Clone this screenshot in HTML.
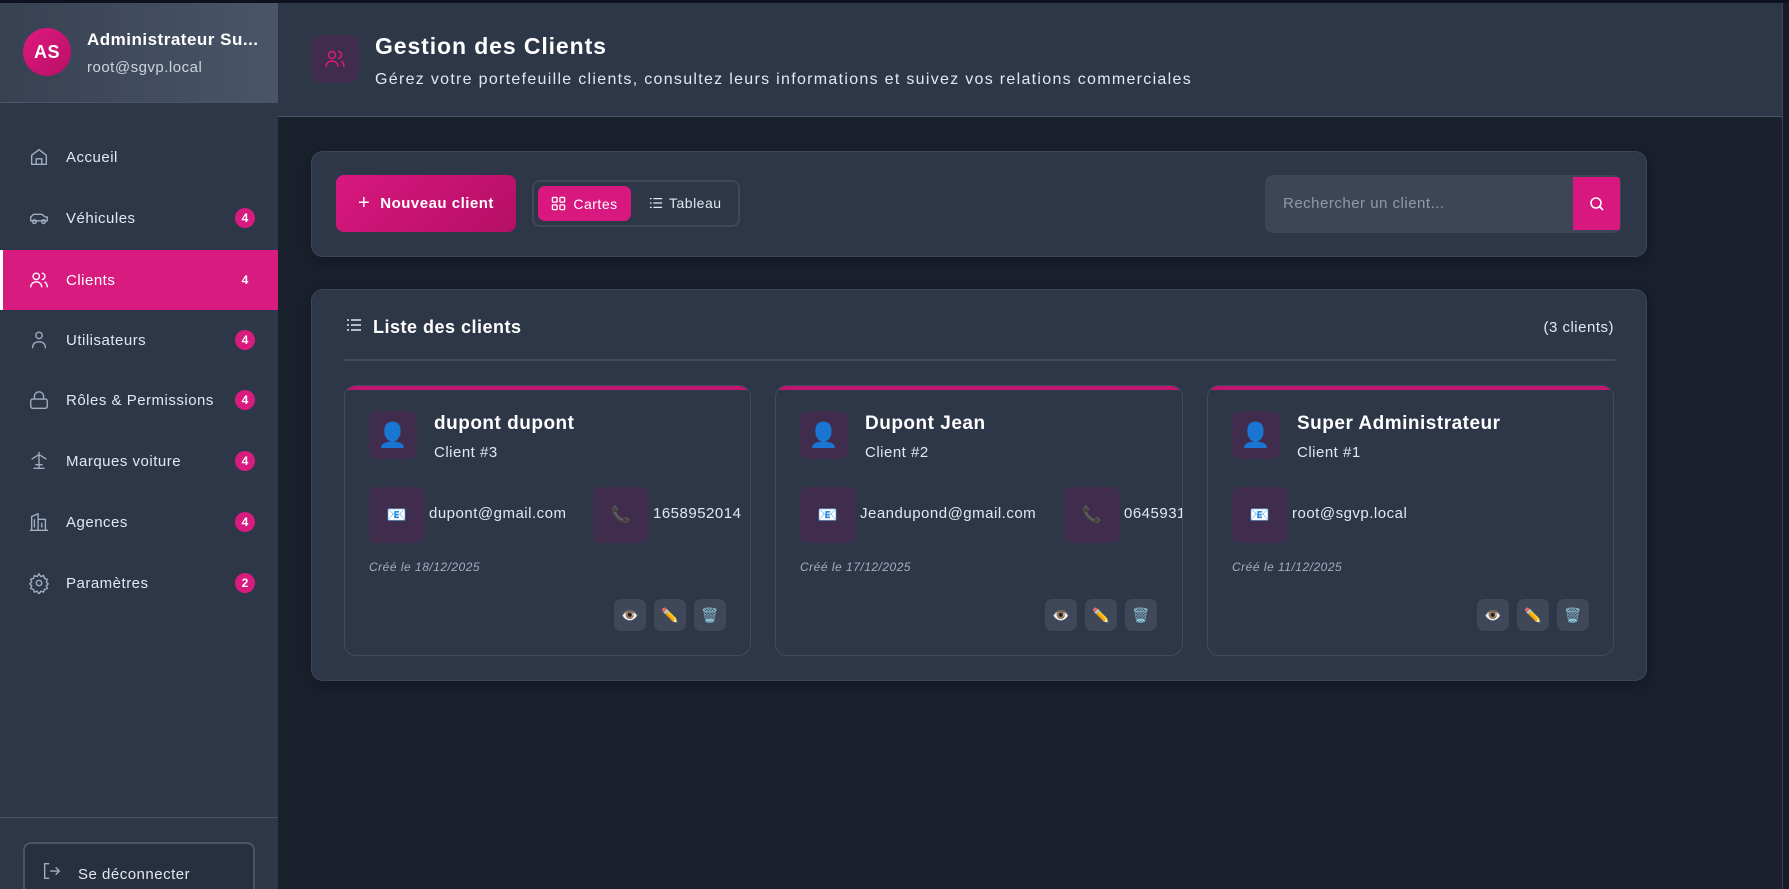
<!DOCTYPE html>
<html><head><meta charset="utf-8"><style>
*{box-sizing:border-box;margin:0;padding:0}
body{width:1789px;height:889px;overflow:hidden;background:#1a202c;font-family:"Liberation Sans",sans-serif;color:#e2e8f0;position:relative;letter-spacing:0.5px}
.abs{position:absolute}
.top{left:0;top:0;width:1789px;height:3px;background:#0e1220}
.side{left:0;top:3px;width:278px;height:886px;background:#2d3748;overflow:hidden}
.sh{left:0;top:0;width:278px;height:100px;background:linear-gradient(90deg,#374152,#4a5568);border-bottom:1px solid #4a5568}
.av{left:23px;top:25px;width:48px;height:48px;border-radius:50%;background:linear-gradient(135deg,#e0197f,#b80f66);color:#fff;font-weight:bold;font-size:18px;display:flex;align-items:center;justify-content:center}
.nav{left:0;width:278px;height:60px;display:flex;align-items:center;font-size:15px;color:#e2e8f0}
.nav svg{position:absolute;left:28px}
.nav span.t{position:absolute;left:66px}
.badge{position:absolute;left:235px;width:20px;height:20px;border-radius:50%;background:#d81b7f;color:#fff;font-size:12px;font-weight:bold;display:flex;align-items:center;justify-content:center;letter-spacing:0}
.active{background:#d81b7f;border-left:3px solid #fff}
.active .badge{background:transparent}
.mh{left:278px;top:3px;width:1504px;height:114px;background:#2d3748;border-bottom:1px solid #4a5568}
.card{background:#2d3748;border:1px solid #3c4657;border-radius:12px;box-shadow:0 4px 14px rgba(0,0,0,.25)}
.cc{background:#2d3748;border:1px solid #414b5c;border-radius:12px;overflow:hidden}
.cc .bar{position:absolute;left:0;top:0;right:0;height:4px;background:#c2166f}
.box{background:#402d4d;border-radius:8px;display:flex;align-items:center;justify-content:center}
.ab{width:32px;height:32px;border-radius:7px;background:#3e4858;display:flex;align-items:center;justify-content:center;font-size:14px}
</style></head><body>
<div class="abs top"></div>
<div class="abs side">
 <div class="abs sh">
  <div class="abs av">AS</div>
  <div class="abs" style="left:87px;top:27px;font-size:17px;font-weight:bold;color:#fff">Administrateur Su...</div>
  <div class="abs" style="left:87px;top:56px;font-size:15px;color:#cbd5e0">root@sgvp.local</div>
 </div>
 <div class="abs nav" style="top:124px"><svg width="22" height="22" viewBox="0 0 24 24" fill="none" stroke="#a0aec0" stroke-width="1.5"><path d="M4 10l8-6 8 6v10H4z M9 20v-6h6v6"/></svg><span class="t">Accueil</span></div>
 <div class="abs nav" style="top:185px"><svg width="22" height="22" viewBox="0 0 24 24" fill="none" stroke="#a0aec0" stroke-width="1.5"><path d="M3 15v-4l3-3h9l4 3h2v4H3z"/><circle cx="7" cy="16" r="2"/><circle cx="17" cy="16" r="2"/></svg><span class="t">Véhicules</span><span class="badge">4</span></div>
 <div class="abs nav active" style="top:247px"><svg width="22" height="22" viewBox="0 0 24 24" fill="none" stroke="#fff" stroke-width="1.5" style="left:25px"><circle cx="9" cy="8" r="3.5"/><path d="M3 20c0-4 3-6 6-6s6 2 6 6M15 4.5a3.5 3.5 0 010 7M18 14c2 1 3 3 3 6"/></svg><span class="t" style="left:63px;color:#fff">Clients</span><span class="badge" style="left:232px">4</span></div>
 <div class="abs nav" style="top:307px"><svg width="22" height="22" viewBox="0 0 24 24" fill="none" stroke="#a0aec0" stroke-width="1.5"><circle cx="12" cy="7" r="3.5"/><path d="M5 21c0-5 3-7 7-7s7 2 7 7"/></svg><span class="t">Utilisateurs</span><span class="badge">4</span></div>
 <div class="abs nav" style="top:367px"><svg width="22" height="22" viewBox="0 0 24 24" fill="none" stroke="#a0aec0" stroke-width="1.5"><rect x="3" y="11" width="18" height="10" rx="2"/><path d="M7 11V8a5 5 0 0110 0v3"/></svg><span class="t">Rôles &amp; Permissions</span><span class="badge">4</span></div>
 <div class="abs nav" style="top:428px"><svg width="22" height="22" viewBox="0 0 24 24" fill="none" stroke="#a0aec0" stroke-width="1.5"><path d="M12 2v18M4 10l8-5 8 5M8 16h8M6 20h12"/></svg><span class="t">Marques voiture</span><span class="badge">4</span></div>
 <div class="abs nav" style="top:489px"><svg width="22" height="22" viewBox="0 0 24 24" fill="none" stroke="#a0aec0" stroke-width="1.5"><path d="M4 21V6l7-3v18M11 9h8v12M2 21h20M7 9v9M15 13v5"/></svg><span class="t">Agences</span><span class="badge">4</span></div>
 <div class="abs nav" style="top:550px"><svg width="22" height="22" viewBox="0 0 24 24" fill="none" stroke="#a0aec0" stroke-width="1.5"><circle cx="12" cy="12" r="3"/><path d="M12 2l2 3 3-1 1 3 3 1-1 3 2 2-2 2 1 3-3 1-1 3-3-1-2 3-2-3-3 1-1-3-3-1 1-3-2-2 2-2-1-3 3-1 1-3 3 1z"/></svg><span class="t">Paramètres</span><span class="badge">2</span></div>
 <div class="abs" style="left:0;top:814px;width:278px;height:1px;background:#4a5568"></div>
 <div class="abs" style="left:23px;top:839px;width:232px;height:60px;border:2px solid #4a5568;border-radius:8px;background:#283040"><svg class="abs" style="left:16px;top:16px" width="22" height="22" viewBox="0 0 24 24" fill="none" stroke="#a0aec0" stroke-width="1.5"><path d="M9 4H4v16h5M10 12h10M16 8l4 4-4 4"/></svg><span class="abs" style="left:53px;top:22px;font-size:15px">Se déconnecter</span></div>
</div>
<div class="abs mh">
 <div class="abs box" style="left:33px;top:32px;width:48px;height:48px;border-radius:10px"><svg width="24" height="24" viewBox="0 0 24 24" fill="none" stroke="#e0197f" stroke-width="1.5"><circle cx="9" cy="8" r="3.5"/><path d="M3 20c0-4 3-6 6-6s6 2 6 6M15 4.5a3.5 3.5 0 010 7M18 14c2 1 3 3 3 6"/></svg></div>
 <div class="abs" style="left:97px;top:30px;font-size:23px;font-weight:bold;color:#fff;letter-spacing:0.9px">Gestion des Clients</div>
 <div class="abs" style="left:97px;top:68px;font-size:16px;color:#e2e8f0;letter-spacing:1.3px">Gérez votre portefeuille clients, consultez leurs informations et suivez vos relations commerciales</div>
</div>
<div class="abs" style="left:1782px;top:3px;width:7px;height:886px;background:#161b27;border-left:1px solid #3a4352"></div>
<div class="abs card" style="left:311px;top:151px;width:1336px;height:106px">
 <div class="abs" style="left:24px;top:23px;width:180px;height:57px;border-radius:8px;background:linear-gradient(135deg,#d8187f,#b50f65);color:#fff;font-size:15px;font-weight:bold;display:flex;align-items:center;justify-content:center"><span style="font-size:20px;font-weight:normal;margin-right:10px">+</span>Nouveau client</div>
 <div class="abs" style="left:220px;top:28px;width:208px;height:47px;border:2px solid #3f4858;border-radius:8px"></div>
 <div class="abs" style="left:226px;top:34px;width:93px;height:35px;border-radius:7px;background:#d8187f;color:#fff;font-size:14px;display:flex;align-items:center;justify-content:center"><svg width="15" height="15" viewBox="0 0 16 16" fill="none" stroke="#fff" stroke-width="1.4" style="margin-right:7px"><rect x="1.5" y="1.5" width="5" height="5" rx="1"/><rect x="9.5" y="1.5" width="5" height="5" rx="1"/><rect x="1.5" y="9.5" width="5" height="5" rx="1"/><rect x="9.5" y="9.5" width="5" height="5" rx="1"/></svg>Cartes</div>
 <div class="abs" style="left:337px;top:43px;font-size:14px;color:#e2e8f0;display:flex;align-items:center"><svg width="14" height="14" viewBox="0 0 16 16" stroke="#e2e8f0" stroke-width="1.4" style="margin-right:6px"><path d="M1 3h2M1 8h2M1 13h2M5 3h10M5 8h10M5 13h10"/></svg>Tableau</div>
 <div class="abs" style="left:953px;top:23px;width:356px;height:58px;border-radius:8px;background:#3c4657;overflow:hidden">
  <span class="abs" style="left:18px;top:20px;font-size:15px;color:#8f99a8">Rechercher un client...</span>
  <div class="abs" style="left:308px;top:2px;width:47px;height:53px;background:#d8187f;display:flex;align-items:center;justify-content:center"><svg width="16" height="16" viewBox="0 0 16 16" fill="none" stroke="#fff" stroke-width="1.6"><circle cx="7" cy="7" r="5"/><path d="M11 11l3 3"/></svg></div>
 </div>
</div>
<div class="abs card" style="left:311px;top:289px;width:1336px;height:392px">
 <svg class="abs" style="left:33px;top:27px" width="18" height="16" viewBox="0 0 16 16" stroke="#e2e8f0" stroke-width="1.4"><path d="M1 3h2M1 8h2M1 13h2M5 3h10M5 8h10M5 13h10"/></svg>
 <div class="abs" style="left:61px;top:27px;font-size:18px;font-weight:bold;color:#fff">Liste des clients</div>
 <div class="abs" style="right:32px;top:29px;font-size:15px;color:#e2e8f0">(3 clients)</div>
 <div class="abs" style="left:32px;top:69px;width:1271px;height:2px;background:#414b5c"></div>
</div>
<div class="abs cc" style="left:344px;top:385px;width:407px;height:271px"><div class="bar"></div>
 <div class="abs box" style="left:24px;top:25px;width:48px;height:48px;font-size:24px">👤</div>
 <div class="abs" style="left:89px;top:27px;font-size:19px;font-weight:bold;color:#fff">dupont dupont</div>
 <div class="abs" style="left:89px;top:58px;font-size:15px">Client #3</div>
 <div class="abs box" style="left:24px;top:101px;width:56px;height:56px;font-size:16px">📧</div>
 <div class="abs" style="left:84px;top:119px;font-size:15px">dupont@gmail.com</div>
 <div class="abs box" style="left:248px;top:101px;width:56px;height:56px;font-size:16px">📞</div>
 <div class="abs" style="left:308px;top:119px;font-size:15px">1658952014</div>
 <div class="abs" style="left:24px;top:174px;font-size:12px;font-style:italic;color:#a0aec0">Créé le 18/12/2025</div>
 <div class="abs ab" style="left:269px;top:213px">👁️</div><div class="abs ab" style="left:309px;top:213px">✏️</div><div class="abs ab" style="left:349px;top:213px">🗑️</div>
</div>
<div class="abs cc" style="left:775px;top:385px;width:408px;height:271px"><div class="bar"></div>
 <div class="abs box" style="left:24px;top:25px;width:48px;height:48px;font-size:24px">👤</div>
 <div class="abs" style="left:89px;top:27px;font-size:19px;font-weight:bold;color:#fff">Dupont Jean</div>
 <div class="abs" style="left:89px;top:58px;font-size:15px">Client #2</div>
 <div class="abs box" style="left:24px;top:101px;width:56px;height:56px;font-size:16px">📧</div>
 <div class="abs" style="left:84px;top:119px;font-size:15px">Jeandupond@gmail.com</div>
 <div class="abs box" style="left:288px;top:101px;width:56px;height:56px;font-size:16px">📞</div>
 <div class="abs" style="left:348px;top:119px;font-size:15px;width:58px;overflow:hidden;white-space:nowrap">0645931542</div>
 <div class="abs" style="left:24px;top:174px;font-size:12px;font-style:italic;color:#a0aec0">Créé le 17/12/2025</div>
 <div class="abs ab" style="left:269px;top:213px">👁️</div><div class="abs ab" style="left:309px;top:213px">✏️</div><div class="abs ab" style="left:349px;top:213px">🗑️</div>
</div>
<div class="abs cc" style="left:1207px;top:385px;width:407px;height:271px"><div class="bar"></div>
 <div class="abs box" style="left:24px;top:25px;width:48px;height:48px;font-size:24px">👤</div>
 <div class="abs" style="left:89px;top:27px;font-size:19px;font-weight:bold;color:#fff">Super Administrateur</div>
 <div class="abs" style="left:89px;top:58px;font-size:15px">Client #1</div>
 <div class="abs box" style="left:24px;top:101px;width:56px;height:56px;font-size:16px">📧</div>
 <div class="abs" style="left:84px;top:119px;font-size:15px">root@sgvp.local</div>
 <div class="abs" style="left:24px;top:174px;font-size:12px;font-style:italic;color:#a0aec0">Créé le 11/12/2025</div>
 <div class="abs ab" style="left:269px;top:213px">👁️</div><div class="abs ab" style="left:309px;top:213px">✏️</div><div class="abs ab" style="left:349px;top:213px">🗑️</div>
</div>
</body></html>
